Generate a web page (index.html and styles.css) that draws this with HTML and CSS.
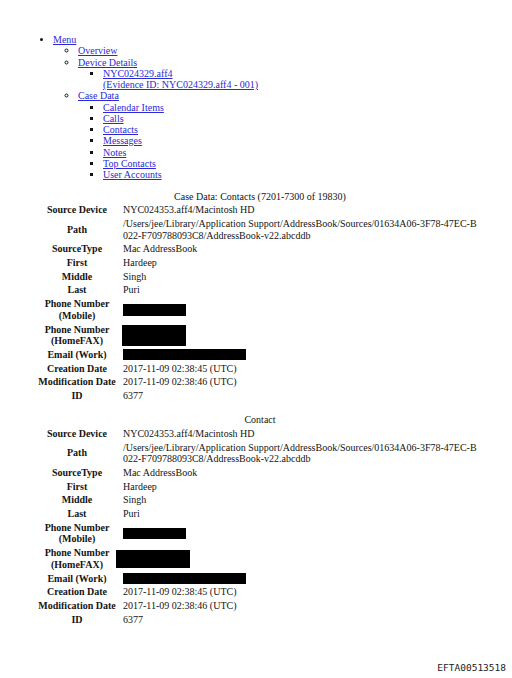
FILE: index.html
```html
<!DOCTYPE html>
<html>
<head>
<meta charset="utf-8">
<link rel="stylesheet" href="styles.css">
</head>
<body>
<ul class="menu">
  <li><a href="#">Menu</a>
    <ul>
      <li><a href="#">Overview</a></li>
      <li><a href="#">Device Details</a>
        <ul>
          <li><a href="#">NYC024329.aff4<br>(Evidence ID: NYC024329.aff4 - 001)</a></li>
        </ul>
      </li>
      <li><a href="#">Case Data</a>
        <ul>
          <li><a href="#">Calendar Items</a></li>
          <li><a href="#">Calls</a></li>
          <li><a href="#">Contacts</a></li>
          <li><a href="#">Messages</a></li>
          <li><a href="#">Notes</a></li>
          <li><a href="#">Top Contacts</a></li>
          <li><a href="#">User Accounts</a></li>
        </ul>
      </li>
    </ul>
  </li>
</ul>

<table class="data first">
  <caption>Case Data: Contacts (7201-7300 of 19830)</caption>
  <tr><th>Source Device</th><td>NYC024353.aff4/Macintosh HD</td></tr>
  <tr><th>Path</th><td>/Users/jee/Library/Application Support/AddressBook/Sources/01634A06-3F78-47EC-B<br>022-F709788093C8/AddressBook-v22.abcddb</td></tr>
  <tr><th>SourceType</th><td>Mac AddressBook</td></tr>
  <tr><th>First</th><td>Hardeep</td></tr>
  <tr><th>Middle</th><td>Singh</td></tr>
  <tr><th>Last</th><td>Puri</td></tr>
  <tr><th>Phone Number<br>(Mobile)</th><td><span class="redact r-mobile"></span></td></tr>
  <tr><th>Phone Number<br>(HomeFAX)</th><td><span class="redact r-fax"></span></td></tr>
  <tr><th>Email (Work)</th><td><span class="redact r-email"></span></td></tr>
  <tr><th>Creation Date</th><td>2017-11-09 02:38:45 (UTC)</td></tr>
  <tr><th>Modification Date</th><td>2017-11-09 02:38:46 (UTC)</td></tr>
  <tr><th>ID</th><td>6377</td></tr>
</table>

<table class="data second">
  <caption>Contact</caption>
  <tr><th>Source Device</th><td>NYC024353.aff4/Macintosh HD</td></tr>
  <tr><th>Path</th><td>/Users/jee/Library/Application Support/AddressBook/Sources/01634A06-3F78-47EC-B<br>022-F709788093C8/AddressBook-v22.abcddb</td></tr>
  <tr><th>SourceType</th><td>Mac AddressBook</td></tr>
  <tr><th>First</th><td>Hardeep</td></tr>
  <tr><th>Middle</th><td>Singh</td></tr>
  <tr><th>Last</th><td>Puri</td></tr>
  <tr><th>Phone Number<br>(Mobile)</th><td><span class="redact r-mobile2"></span></td></tr>
  <tr><th>Phone Number<br>(HomeFAX)</th><td><span class="redact r-fax2"></span></td></tr>
  <tr><th>Email (Work)</th><td><span class="redact r-email"></span></td></tr>
  <tr><th>Creation Date</th><td>2017-11-09 02:38:45 (UTC)</td></tr>
  <tr><th>Modification Date</th><td>2017-11-09 02:38:46 (UTC)</td></tr>
  <tr><th>ID</th><td>6377</td></tr>
</table>

<div class="stamp">EFTA00513518</div>
</body>
</html>
```
FILE: styles.css
```css
html, body {
  margin: 0;
  padding: 0;
  background: #ffffff;
}
body {
  font-family: "Liberation Serif", "Times New Roman", serif;
  font-size: 10px;
  color: #141414;
  padding: 34px 0 0 28px;
  width: 484px;
}
.menu {
  margin: 0;
  padding-left: 25px;
  line-height: 11.25px;
  list-style-type: disc;
}
.menu ul {
  margin: 0;
  padding-left: 25px;
  list-style-type: circle;
}
.menu ul ul {
  list-style-type: square;
}
.menu a {
  color: #2a2ad6;
  text-decoration: underline;
}
.data {
  width: 454px;
  margin-left: 5px;
  border-collapse: separate;
  border-spacing: 2px;
  line-height: 11.7px;
}
.data caption {
  line-height: 10px;
  text-align: center;
}
.data.first {
  margin-top: 12px;
}
.data.second {
  margin-top: 10px;
}
.data.second caption {
  line-height: 12px;
}
.data th {
  width: 84px;
  padding: 0;
  font-weight: bold;
  text-align: center;
  vertical-align: middle;
}
.data td {
  padding: 0 0 0 2px;
  text-align: left;
  vertical-align: middle;
}
.redact {
  display: block;
  background: #000;
}
.r-mobile { width: 63px; height: 12px; }
.r-fax { width: 64px; height: 21px; margin-left: -1px; }
.r-email { width: 123px; height: 11px; }
.r-mobile2 { width: 63px; height: 11px; }
.r-fax2 { width: 74px; height: 18px; margin-left: -7px; }
.stamp {
  font-family: "DejaVu Sans Mono", monospace;
  font-size: 9.5px;
  color: #222;
  text-align: right;
  margin-top: 35px;
  padding-right: 6px;
}
```
